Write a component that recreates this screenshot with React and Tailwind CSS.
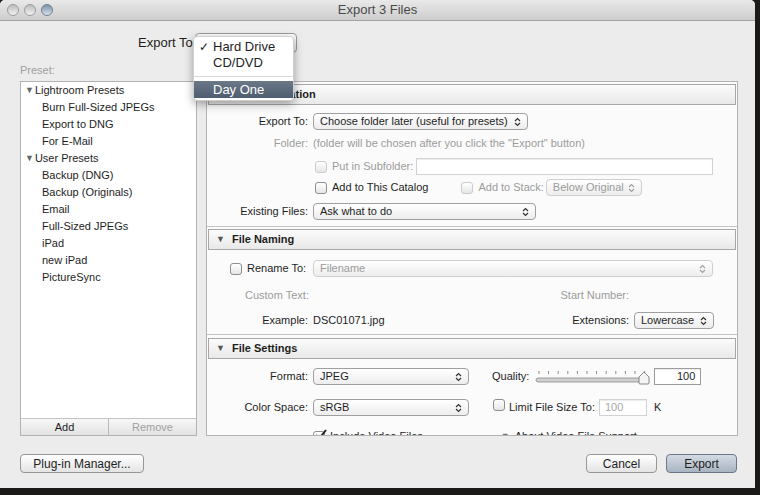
import React from 'react';
import cn from 'clsx';

const Arrows = ({ dim = false }) => (
   <svg width="7" height="10" viewBox="0 0 7 10" className="shrink-0">
      <path d="M1 4 L3.5 1.5 L6 4" fill="none" stroke={dim ? '#a0a0a0' : '#333'} strokeWidth="1.2" />
      <path d="M1 6 L3.5 8.5 L6 6" fill="none" stroke={dim ? '#a0a0a0' : '#333'} strokeWidth="1.2" />
   </svg>
);

const Select = ({ children, className = '', disabled = false }) => (
   <div
      className={cn(
         'h-[17px] border rounded-[4px] flex items-center pl-[6px] pr-[6px] bg-linear-to-b from-white to-[#ededed]',
         disabled ? 'border-[#cfcfcf] text-[#9b9b9b]' : 'border-[#9f9f9f] text-[#1e1e1e]',
         className
      )}>
      <span className="flex-1 truncate leading-none">{children}</span>
      <Arrows dim={disabled} />
   </div>
);

const Check = ({ checked = false, disabled = false }) => (
   <span
      className={cn(
         'relative inline-block w-[12px] h-[12px] rounded-[3px] border bg-linear-to-b from-white to-[#e6e6e6] shrink-0',
         disabled ? 'border-[#cbcbcb]' : 'border-[#8e8e8e]'
      )}>
      {checked && (
         <svg width="14" height="13" viewBox="0 0 14 13" className="absolute -top-[3px] left-0">
            <path d="M2 6 L5 10 L12 1" fill="none" stroke="#222" strokeWidth="2" />
         </svg>
      )}
   </span>
);

const Field = ({ children, className = '', disabled = false }) => (
   <div
      className={cn(
         'h-[17px] border bg-white flex items-center px-[5px] leading-none shadow-[inset_0_1px_1px_rgba(0,0,0,0.08)]',
         disabled ? 'border-[#d2d2d2] text-[#a8a8a8]' : 'border-[#9c9c9c] text-[#1e1e1e]',
         className
      )}>
      {children}
   </div>
);

const Button = ({ children, className = '', primary = false }) => (
   <div
      className={cn(
         'h-[19px] border rounded-[4px] flex items-center justify-center text-[12px] leading-none',
         primary ? 'border-[#6b7788] bg-linear-to-b from-[#d3dae3] to-[#a9b4c2]' : 'border-[#979797] bg-linear-to-b from-white to-[#e4e4e4]',
         className
      )}>
      {children}
   </div>
);

const SectionHeader = ({ title }) => (
   <div className="mx-[1px] h-[21px] border border-[#a7a7a7] bg-linear-to-b from-[#fbfbfb] to-[#e9e9e9] flex items-center pl-[7px] gap-[7px] font-bold text-[#1e1e1e]">
      <span className="text-[9px] text-[#555]">▼</span>
      <span>{title}</span>
   </div>
);

const Label = ({ children, gray = false }) => (
   <div className={cn('w-[106px] shrink-0 text-right pr-[5px]', gray && 'text-[#9b9b9b]')}>{children}</div>
);

const presets = [
   { group: 'Lightroom Presets', items: ['Burn Full-Sized JPEGs', 'Export to DNG', 'For E-Mail'] },
   { group: 'User Presets', items: ['Backup (DNG)', 'Backup (Originals)', 'Email', 'Full-Sized JPEGs', 'iPad', 'new iPad', 'PictureSync'] },
];

const ticks = Array.from({ length: 12 }, (_, i) => i);

export default function App() {
   return (
      <div className="w-[760px] h-[495px] bg-[#1c1a18] overflow-hidden font-['Liberation_Sans',sans-serif] text-[11px] text-[#1e1e1e]">
         <div className="relative w-[755px] h-[488px] bg-[#ececec] rounded-t-[5px] flex flex-col">
            {/* title bar */}
            <div className="h-[21px] shrink-0 rounded-t-[5px] bg-linear-to-b from-[#e9e9e9] to-[#cdcdcd] border-b border-[#a3a3a3] flex items-center relative">
               <div className="flex gap-[5px] pl-[7px]">
                  <span className="w-[12px] h-[12px] rounded-full border border-[#9c9c9c] bg-linear-to-b from-[#bcbcbc] to-[#f2f2f2]" />
                  <span className="w-[12px] h-[12px] rounded-full border border-[#9c9c9c] bg-linear-to-b from-[#bcbcbc] to-[#f2f2f2]" />
                  <span className="w-[12px] h-[12px] rounded-full border border-[#6f7f90] bg-linear-to-b from-[#7f93a8] to-[#d6e0ea]" />
               </div>
               <div className="absolute inset-0 flex items-center justify-center text-[13px] text-[#4a4a4a]">Export 3 Files</div>
            </div>

            {/* export to row */}
            <div className="h-[38px] shrink-0 flex items-center pl-[138px] pt-[6px] text-[13px]">
               <span>Export To</span>
               <div className="ml-[2px] w-[102px] h-[20px] border border-[#9a9a9a] rounded-[4px] bg-linear-to-b from-white to-[#e6e6e6]" />
            </div>

            <div className="h-[22px] shrink-0 pl-[20px] flex items-center text-[#a0a0a0]">Preset:</div>

            {/* main panels */}
            <div className="h-[355px] shrink-0 flex pl-[20px]">
               <div className="w-[177px] border border-[#b3b3b3] bg-white flex flex-col">
                  <div className="flex-1">
                     {presets.map(p => (
                        <div key={p.group}>
                           <div className="h-[17px] flex items-center pl-[4px] gap-[1px]">
                              <span className="text-[9px] text-[#666]">▼</span>
                              <span>{p.group}</span>
                           </div>
                           {p.items.map(it => (
                              <div key={it} className="h-[17px] flex items-center pl-[21px]">
                                 {it}
                              </div>
                           ))}
                        </div>
                     ))}
                  </div>
                  <div className="h-[17px] flex border-t border-[#c3c3c3] bg-linear-to-b from-[#f7f7f7] to-[#e3e3e3]">
                     <div className="w-[88px] flex items-center justify-center border-r border-[#b9b9b9]">Add</div>
                     <div className="flex-1 flex items-center justify-center text-[#a0a0a0]">Remove</div>
                  </div>
               </div>

               <div className="ml-[9px] w-[532px] border border-[#b3b3b3] bg-[#fbfbfb] overflow-hidden flex flex-col pt-[2px]">
                  {/* export location */}
                  <div className="border-b border-[#c4c4c4]">
                     <SectionHeader title="Export Location" />
                     <div className="pt-[8px] pb-[6px]">
                        <div className="h-[17px] flex items-center">
                           <Label>Export To:</Label>
                           <Select className="w-[215px]">Choose folder later (useful for presets)</Select>
                        </div>
                        <div className="mt-[5px] h-[17px] flex items-center">
                           <Label gray>Folder:</Label>
                           <span className="text-[#9b9b9b]">(folder will be chosen after you click the "Export" button)</span>
                        </div>
                        <div className="mt-[6px] h-[17px] flex items-center">
                           <div className="w-[108px] shrink-0" />
                           <Check disabled />
                           <span className="ml-[5px] text-[#9b9b9b]">Put in Subfolder:</span>
                           <Field disabled className="ml-[3px] w-[297px]" />
                        </div>
                        <div className="mt-[4px] h-[17px] flex items-center">
                           <div className="w-[108px] shrink-0" />
                           <Check />
                           <span className="ml-[5px]">Add to This Catalog</span>
                           <div className="ml-[33px] flex items-center">
                              <Check disabled />
                              <span className="ml-[5px] text-[#9b9b9b]">Add to Stack:</span>
                              <Select disabled className="ml-[2px] w-[96px]">Below Original</Select>
                           </div>
                        </div>
                        <div className="mt-[7px] h-[17px] flex items-center">
                           <Label>Existing Files:</Label>
                           <Select className="w-[223px]">Ask what to do</Select>
                        </div>
                     </div>
                  </div>

                  {/* file naming */}
                  <div className="mt-[2px] border-b border-[#c4c4c4]">
                     <SectionHeader title="File Naming" />
                     <div className="pt-[10px] pb-[5px]">
                        <div className="h-[17px] flex items-center">
                           <div className="w-[23px] shrink-0" />
                           <Check />
                           <span className="ml-[5px] w-[66px]">Rename To:</span>
                           <Select disabled className="w-[400px]">Filename</Select>
                        </div>
                        <div className="mt-[10px] h-[17px] flex items-center text-[#9b9b9b]">
                           <span className="ml-[38px]">Custom Text:</span>
                           <span className="ml-auto mr-[108px]">Start Number:</span>
                        </div>
                        <div className="mt-[8px] h-[17px] flex items-center">
                           <Label>Example:</Label>
                           <span>DSC01071.jpg</span>
                           <span className="ml-auto mr-[5px]">Extensions:</span>
                           <Select className="w-[80px] mr-[23px]">Lowercase</Select>
                        </div>
                     </div>
                  </div>

                  {/* file settings */}
                  <div className="mt-[3px]">
                     <SectionHeader title="File Settings" />
                     <div className="pt-[9px]">
                        <div className="h-[17px] flex items-center">
                           <Label>Format:</Label>
                           <Select className="w-[156px]">JPEG</Select>
                           <span className="ml-[23px]">Quality:</span>
                           <svg width="118" height="17" viewBox="0 0 118 17" className="ml-[6px]">
                              {ticks.map(i => (
                                 <line key={i} x1={4 + i * 9.6} y1="3" x2={4 + i * 9.6} y2="6" stroke="#8a8a8a" strokeWidth="1" />
                              ))}
                              <rect x="1" y="10" width="110" height="4" rx="2" fill="#d0d0d0" stroke="#8c8c8c" strokeWidth="0.8" />
                              <path d="M104 9 L109 4 L114 9 L114 15 Q114 16 113 16 L105 16 Q104 16 104 15 Z" fill="#f4f4f4" stroke="#7c7c7c" strokeWidth="0.9" />
                           </svg>
                           <Field className="ml-[1px] w-[47px] justify-end">100</Field>
                        </div>
                        <div className="mt-[14px] h-[17px] flex items-center">
                           <Label>Color Space:</Label>
                           <Select className="w-[156px]">sRGB</Select>
                           <div className="ml-[24px]"><Check /></div>
                           <span className="ml-[4px]">Limit File Size To:</span>
                           <Field disabled className="ml-[4px] w-[48px]">100</Field>
                           <span className="ml-[7px]">K</span>
                        </div>
                        <div className="mt-[12px] h-[17px] flex items-center">
                           <div className="w-[106px] shrink-0" />
                           <Check checked />
                           <span className="ml-[5px]">Include Video Files</span>
                           <span className="ml-[78px] text-[9px] text-[#777]">▼</span>
                           <span className="ml-[5px]">About Video File Support</span>
                        </div>
                     </div>
                  </div>
               </div>
            </div>

            {/* bottom buttons */}
            <div className="flex-1 flex items-start pt-[18px] pl-[20px] pr-[18px]">
               <Button className="w-[124px]">Plug-in Manager...</Button>
               <Button className="ml-auto w-[71px]">Cancel</Button>
               <Button primary className="ml-[9px] w-[71px]">Export</Button>
            </div>

            {/* popup menu */}
            <div className="absolute left-[193px] top-[36px] w-[101px] h-[65px] bg-white rounded-[4px] shadow-[0_3px_10px_rgba(0,0,0,0.35)] border border-[#d0d0d0] text-[13px] py-[2px]">
               <div className="h-[16px] flex items-center">
                  <span className="w-[19px] text-center text-[12px]">✓</span>
                  <span>Hard Drive</span>
               </div>
               <div className="h-[16px] flex items-center pl-[19px]">CD/DVD</div>
               <div className="h-[10px] flex items-center">
                  <div className="w-full h-px bg-[#dadada]" />
               </div>
               <div className="h-[17px] flex items-center pl-[19px] text-white bg-linear-to-b from-[#6a7888] to-[#4e5d6f]">Day One</div>
            </div>
         </div>
      </div>
   );
}
